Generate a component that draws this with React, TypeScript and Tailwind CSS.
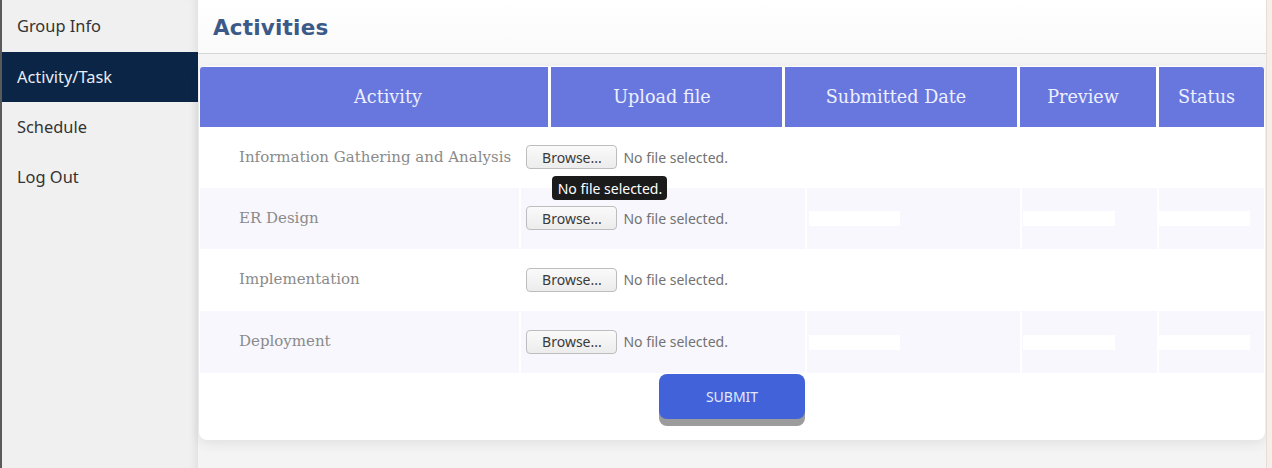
const navItems = ["Group Info", "Activity/Task", "Schedule", "Log Out"];

const activities = [
  "Information Gathering and Analysis",
  "ER Design",
  "Implementation",
  "Deployment",
];

const headers = [
  { label: "Activity", w: "w-[348px] pl-[28px]" },
  { label: "Upload file", w: "w-[231px] pr-[9px]" },
  { label: "Submitted Date", w: "w-[232px] pr-[10px]" },
  { label: "Preview", w: "w-[136px] pr-[10px]" },
  { label: "Status", w: "w-[105px] pr-[10px]" },
];

const FilePicker = () => (
  <div className="flex items-center gap-[6px] font-['Noto_Sans',sans-serif] text-[14px]">
    <button className="h-[24px] w-[91px] rounded-[4px] border border-[#bdbdbd] bg-gradient-to-b from-[#fafafa] to-[#ececec] text-[#3a3a3a]">
      Browse...
    </button>
    <span className="text-[#727272]">No file selected.</span>
  </div>
);

const Blank = ({ w }: { w: string }) => (
  <div className={`h-[15px] ${w} bg-white`} />
);

export default function App() {
  return (
    <div className="flex h-[468px] w-[1272px] overflow-hidden bg-[#f3f3f3]">
      {/* Sidebar */}
      <aside className="w-[198px] shrink-0 border-l-2 border-[#5a5a5a] bg-[#f0f0f0] font-['Noto_Sans',sans-serif] text-[16.4px] shadow-[inset_-8px_0_8px_-6px_rgba(0,0,0,0.08)]">
        {navItems.map((item, i) => (
          <div
            key={item}
            className={`flex items-center pl-[15px] ${i === 0 ? "h-[52px]" : "h-[50px]"} ${
              i === 1 ? "bg-[#0b2547] text-[#e8ecf3]" : "text-[#333]"
            }`}
          >
            {item}
          </div>
        ))}
      </aside>

      {/* Main */}
      <main className="flex w-[1068px] shrink-0 flex-col bg-[#f4f4f4]">
        <header className="flex h-[54px] shrink-0 items-center border-b border-[#d6d6d6] bg-gradient-to-b from-white to-[#fafafa] pl-[15px] pt-[4px]">
          <h1 className="font-['DejaVu_Sans',sans-serif] text-[21.5px] font-bold tracking-[0.2px] text-[#3b5a88]">
            Activities
          </h1>
        </header>

        <div className="px-[1px] pt-[12px]">
          <div className="rounded-lg bg-white p-[1px] shadow-[0_4px_12px_rgba(0,0,0,0.08)]">
            {/* Table head */}
            <div className="flex h-[60px] gap-[3px] font-['DejaVu_Serif',serif] text-[17.6px] text-[#eef0ff]">
              {headers.map((h, i) => (
                <div
                  key={h.label}
                  className={`${h.w} flex items-center justify-center bg-[#6877de] ${
                    i === 0 ? "rounded-tl-[3px]" : ""
                  } ${i === headers.length - 1 ? "rounded-tr-[3px]" : ""}`}
                >
                  {h.label}
                </div>
              ))}
            </div>

            {/* Rows */}
            {activities.map((a, i) => {
              const shaded = i % 2 === 1;
              return (
                <div
                  key={a}
                  className={`flex gap-[2px] ${i < 2 ? "h-[61px]" : "h-[62px]"} ${
                    shaded ? "bg-white" : ""
                  }`}
                >
                  <div
                    className={`flex w-[320px] items-center pb-[1px] pl-[39px] font-['DejaVu_Serif',serif] text-[15px] text-[#8a8a8a] ${
                      shaded ? "bg-[#f7f7fd]" : ""
                    }`}
                  >
                    {a}
                  </div>
                  <div
                    className={`relative flex w-[284px] items-center pb-[1px] pl-[5px] ${
                      shaded ? "bg-[#f7f7fd]" : ""
                    }`}
                  >
                    <FilePicker />
                    {i === 0 && (
                      <div className="absolute left-[31px] top-[49px] z-10 flex h-[24px] w-[115px] items-center justify-center rounded-[4px] bg-[#1b1b1b] font-['Noto_Sans',sans-serif] text-[14px] text-white">
                        No file selected.
                      </div>
                    )}
                  </div>
                  <div
                    className={`flex w-[214px] items-center pl-[2px] ${
                      shaded ? "bg-[#f7f7fd]" : ""
                    }`}
                  >
                    {shaded && <Blank w="w-[91px]" />}
                  </div>
                  <div
                    className={`flex w-[135px] items-center pl-[1px] ${
                      shaded ? "bg-[#f7f7fd]" : ""
                    }`}
                  >
                    {shaded && <Blank w="w-[92px]" />}
                  </div>
                  <div
                    className={`flex w-[105px] items-center ${
                      shaded ? "bg-[#f7f7fd]" : ""
                    }`}
                  >
                    {shaded && <Blank w="w-[91px]" />}
                  </div>
                </div>
              );
            })}

            {/* Submit */}
            <div className="flex h-[66px] justify-center pt-[1px]">
              <button className="h-[45px] w-[146px] rounded-lg bg-[#4262d9] font-['Noto_Sans',sans-serif] text-[14px] text-[#e3e8fb] shadow-[0_7px_0_#9c9c9c]">
                SUBMIT
              </button>
            </div>
          </div>
        </div>
      </main>

      {/* Right edge */}
      <div className="w-[6px] shrink-0 border-l border-[#e6ddd5] bg-[#f6efe9]" />
    </div>
  );
}
